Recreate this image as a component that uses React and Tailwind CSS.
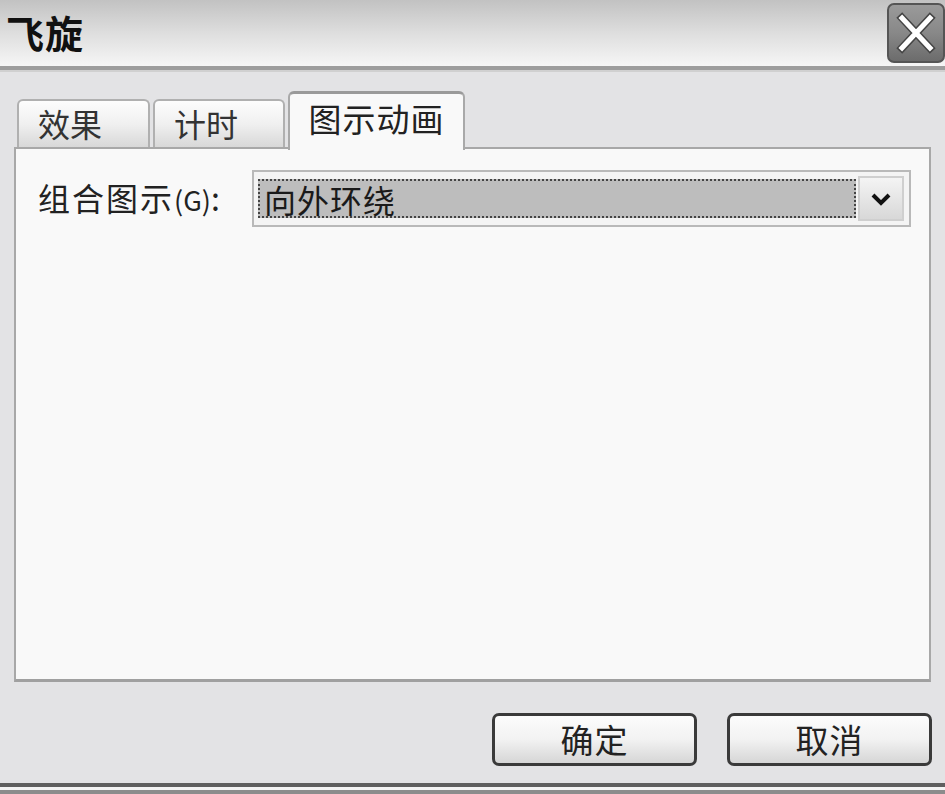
import React from "react";

const F = { fontFamily: '"Noto Sans CJK SC", "Noto Sans", sans-serif' };

function CloseBtn() {
  return (
    <div className="mt-[3px] h-[60px] w-[58px] rounded-[7px] border-2 border-[#555] bg-gradient-to-b from-[#9a9a9a] via-[#888] to-[#6c6c6c] flex items-center justify-center">
      <svg width="44" height="44" viewBox="0 0 44 44">
        <path d="M8 7 L36 37 M36 7 L8 37" stroke="#444" strokeWidth="8" strokeLinecap="square" />
        <path d="M8 7 L36 37 M36 7 L8 37" stroke="#fff" strokeWidth="5" strokeLinecap="square" />
      </svg>
    </div>
  );
}

function Tab({ label, active, w }) {
  if (active) {
    return (
      <div
        className="relative z-10 -mb-[3px] h-[59px] rounded-t-[6px] border-x-2 border-t-[3px] border-[#a9a9a9] border-t-[#9a9a9a] bg-[#f9f9f9] flex items-start justify-center pt-[2px]"
        style={{ width: w }}
      >
        <span className="text-[33px] leading-[44px] text-[#222] tracking-[1px]">{label}</span>
      </div>
    );
  }
  return (
    <div
      className="h-[48px] rounded-t-[6px] border-x-2 border-t-2 border-[#b0b0b0] bg-gradient-to-b from-[#fdfdfd] via-[#f0f0f0] to-[#d8d8d8] flex items-start pl-[19px]"
      style={{ width: w }}
    >
      <span className="text-[32px] leading-[44px] text-[#333]">{label}</span>
    </div>
  );
}

function Button({ label }) {
  return (
    <div className="h-[53px] w-[205px] rounded-[7px] border-[3px] border-[#3a3a3a] bg-gradient-to-b from-[#fcfcfc] via-[#f2f2f2] to-[#d6d6d6] flex items-center justify-center">
      <span className="text-[33px] leading-none text-[#222] tracking-[1px]">{label}</span>
    </div>
  );
}

export default function App() {
  return (
    <div style={F} className="w-[945px] h-[794px] bg-[#e3e3e5] flex flex-col overflow-hidden">
      {/* title bar */}
      <div className="h-[66px] shrink-0 bg-gradient-to-b from-[#c2c2c2] via-[#dedede] to-[#f6f6f6] flex items-start justify-between pl-[6px]">
        <span className="mt-[9px] text-[38px] leading-[46px] font-bold text-[#111] tracking-[1px]">飞旋</span>
        <CloseBtn />
      </div>
      <div className="h-[4px] shrink-0 bg-[#9d9d9d]" />
      <div className="h-[2px] shrink-0 bg-[#d0d0d0]" />

      {/* tabs */}
      <div className="pl-[17px] pt-[19px] flex items-end gap-[3px] shrink-0">
        <Tab label="效果" w={133} />
        <Tab label="计时" w={132} />
        <Tab label="图示动画" w={177} active />
      </div>

      {/* panel */}
      <div className="mx-[14px] w-[917px] h-[535px] shrink-0 border-x-2 border-b-[3px] border-t-2 border-[#a8a8a8] border-b-[#a0a0a0] bg-[#f9f9f9] pt-[21px] pl-[22px]">
        <div className="flex items-center">
          <span className="text-[32px] leading-[40px] text-[#222] tracking-[2px] w-[214px] whitespace-nowrap">
            组合图示<span className="text-[27px] tracking-[0px]">(G)</span>:
          </span>
          <div className="h-[57px] w-[659px] border-2 border-[#b9b9b9] bg-[#f4f4f4] flex items-center pl-[4px] pr-[5px]">
            <div className="h-[39px] flex-1 bg-[#bdbdbd] border-2 border-dotted border-[#444] flex items-center pl-[4px]">
              <span className="text-[32px] leading-none text-[#1a1a1a] tracking-[1px]">向外环绕</span>
            </div>
            <div className="h-[45px] w-[46px] ml-[2px] border-2 border-[#cfcfcf] bg-gradient-to-b from-[#f4f4f4] to-[#d8d8d8] flex items-center justify-center">
              <svg width="22" height="14" viewBox="0 0 22 14">
                <path d="M3 3 L11 11 L19 3" fill="none" stroke="#111" strokeWidth="4" />
              </svg>
            </div>
          </div>
        </div>
      </div>

      {/* buttons */}
      <div className="flex justify-end gap-[30px] pr-[13px] pt-[31px] shrink-0">
        <Button label="确定" />
        <Button label="取消" />
      </div>

      <div className="flex-1" />
      <div className="h-[4px] shrink-0 bg-[#5f5f5f]" />
      <div className="h-[3px] shrink-0 bg-[#f4f4f4]" />
      <div className="h-[4px] shrink-0 bg-[#8c8c8c]" />
    </div>
  );
}
